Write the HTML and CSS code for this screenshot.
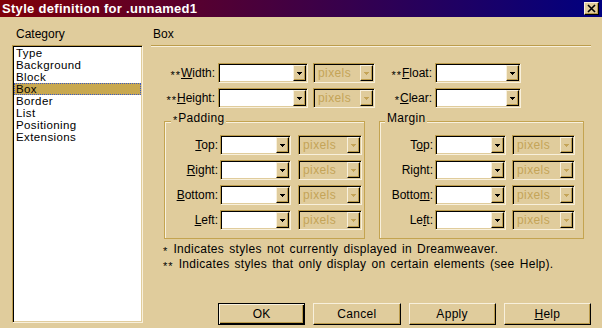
FILE: index.html
```html
<!DOCTYPE html>
<html lang="en">
<head>
    <meta charset="UTF-8">
    <title>Style definition for .unnamed1</title>
    <link rel="stylesheet" href="styles.css">
</head>
<body>

    <div class="dialog">
        <div class="titlebar">
            <span class="title">Style definition for .unnamed1</span>
            <span class="close">
                <svg width="13" height="11" viewBox="0 0 13 11"><path d="M3 2l7 7M10 2l-7 7" stroke="#000" stroke-width="1.6" fill="none"/></svg>
            </span>
        </div>

        <div class="dialog-body">
            <!-- Category list on the left -->
            <div class="category-col">
                <div class="caption">Category</div>
                <ul class="listbox">
                    <li>Type</li>
                    <li>Background</li>
                    <li>Block</li>
                    <li class="selected">Box</li>
                    <li>Border</li>
                    <li>List</li>
                    <li>Positioning</li>
                    <li>Extensions</li>
                </ul>
            </div>

            <div class="main-col">
                <div class="caption heading">Box</div>
                <div class="rule"></div>

                <div class="size-grid">
                    <div class="label"><span class="ast">**</span><u>W</u>idth:</div>
                    <div class="combo"><span class="field"></span><span class="drop"></span></div>
                    <div class="combo units disabled"><span class="field">pixels</span><span class="drop"></span></div>
                    <div class="label"><span class="ast">**</span><u>F</u>loat:</div>
                    <div class="combo wide"><span class="field"></span><span class="drop"></span></div>

                    <div class="label"><span class="ast">**</span><u>H</u>eight:</div>
                    <div class="combo"><span class="field"></span><span class="drop"></span></div>
                    <div class="combo units disabled"><span class="field">pixels</span><span class="drop"></span></div>
                    <div class="label"><span class="ast">*</span><u>C</u>lear:</div>
                    <div class="combo wide"><span class="field"></span><span class="drop"></span></div>
                </div>

                <div class="groups">
                    <div class="group group-padding">
                        <div class="group-title"><span class="ast">*</span>Padding</div>
                        <div class="group-grid">
                            <div class="label"><u>T</u>op:</div>
                            <div class="combo"><span class="field"></span><span class="drop"></span></div>
                            <div class="combo disabled"><span class="field">pixels</span><span class="drop"></span></div>

                            <div class="label"><u>R</u>ight:</div>
                            <div class="combo"><span class="field"></span><span class="drop"></span></div>
                            <div class="combo disabled"><span class="field">pixels</span><span class="drop"></span></div>

                            <div class="label"><u>B</u>ottom:</div>
                            <div class="combo"><span class="field"></span><span class="drop"></span></div>
                            <div class="combo disabled"><span class="field">pixels</span><span class="drop"></span></div>

                            <div class="label"><u>L</u>eft:</div>
                            <div class="combo"><span class="field"></span><span class="drop"></span></div>
                            <div class="combo disabled"><span class="field">pixels</span><span class="drop"></span></div>
                        </div>
                    </div>

                    <div class="group group-margin">
                        <div class="group-title">Margin</div>
                        <div class="group-grid">
                            <div class="label">T<u>o</u>p:</div>
                            <div class="combo"><span class="field"></span><span class="drop"></span></div>
                            <div class="combo disabled"><span class="field">pixels</span><span class="drop"></span></div>

                            <div class="label">Ri<u>g</u>ht:</div>
                            <div class="combo"><span class="field"></span><span class="drop"></span></div>
                            <div class="combo disabled"><span class="field">pixels</span><span class="drop"></span></div>

                            <div class="label">Botto<u>m</u>:</div>
                            <div class="combo"><span class="field"></span><span class="drop"></span></div>
                            <div class="combo disabled"><span class="field">pixels</span><span class="drop"></span></div>

                            <div class="label">Le<u>f</u>t:</div>
                            <div class="combo"><span class="field"></span><span class="drop"></span></div>
                            <div class="combo disabled"><span class="field">pixels</span><span class="drop"></span></div>
                        </div>
                    </div>
                </div>

                <div class="notes">
                    <div class="note"><span class="ast">*</span> Indicates styles not currently displayed in Dreamweaver.</div>
                    <div class="note"><span class="ast">**</span> Indicates styles that only display on certain elements (see Help).</div>
                </div>

                <div class="buttons">
                    <button class="btn default">OK</button>
                    <button class="btn">Cancel</button>
                    <button class="btn">Apply</button>
                    <button class="btn"><u>H</u>elp</button>
                </div>
            </div>
        </div>
    </div>

</body>
</html>
```

FILE: styles.css
```css
body {
    margin: 0;
    font-family: 'Liberation Sans', Arial, sans-serif;
    font-size: 12px;
    color: #000;
}

.dialog {
    width: 602px;
    height: 328px;
    background-color: #e0cc9c; /* tan face colour */
    overflow: hidden;
}

/* Title bar */
.titlebar {
    height: 17px;
    display: flex;
    align-items: center;
    justify-content: space-between;
    background: linear-gradient(to right, #800008, #000080);
}

.title {
    color: #fff;
    font-weight: bold;
    font-size: 13px;
    letter-spacing: 0.3px;
    padding-left: 2px;
    line-height: 17px;
}

.close {
    width: 15px;
    height: 13px;
    box-sizing: border-box;
    margin-right: 3px;
    background-color: #e0cc9c;
    border: 1px solid;
    border-color: #f8f0dc #000 #000 #f8f0dc;
    box-shadow: inset -1px -1px #bc9c4c;
    display: flex;
}

.dialog-body {
    display: flex;
    padding-top: 10px;
}

.caption {
    line-height: 14px;
    height: 14px;
    margin-bottom: 4px;
}

/* Category list */
.category-col {
    margin-left: 12px;
    width: 131px;
}

.category-col .caption {
    padding-left: 4px;
}

.listbox {
    list-style: none;
    margin: 0;
    padding: 1px;
    height: 278px;
    box-sizing: border-box;
    background: #fff;
    border: 1px solid;
    border-color: #bc9c4c #f8f0dc #f8f0dc #bc9c4c;
    box-shadow: inset 1px 1px #000, inset -1px -1px #e0cc9c;
}

.listbox li {
    line-height: 12px;
    height: 12px;
    font-size: 11.5px;
    letter-spacing: 0.4px;
    padding-left: 2px;
    box-sizing: border-box;
}

.listbox li.selected {
    background-color: #c8a850;
    outline: 1px dotted #3a5ac8;
    outline-offset: -1px;
}

/* Main panel */
.main-col {
    margin-left: 8px;
    width: 440px;
}

.heading {
    padding-left: 2px;
    margin-bottom: 4px;
}

.rule {
    height: 1px;
    background-color: #bc9c4c;
    border-bottom: 1px solid #f8f0dc;
}

.label {
    text-align: right;
    white-space: nowrap;
    line-height: 20px;
    height: 20px;
}

.ast {
    vertical-align: -2px;
    line-height: 1;
    font-size: 11px;
    letter-spacing: 1px;
}

.size-grid {
    margin-top: 16px;
    display: grid;
    grid-template-columns: 67px 95px 62px 60px 86px;
    grid-auto-rows: 20px;
    row-gap: 5px;
}

.size-grid .label {
    padding-right: 3px;
}

.size-grid .combo {
    width: 90px;
}

.size-grid .combo.units {
    width: 62px;
}

.size-grid .combo.wide {
    width: 86px;
}

/* Combo boxes */
.combo {
    display: flex;
    height: 20px;
    box-sizing: border-box;
    padding: 1px;
    border: 1px solid;
    border-color: #bc9c4c #f8f0dc #f8f0dc #bc9c4c;
    box-shadow: inset 1px 1px #000, inset -1px -1px #e0cc9c;
}

.field {
    flex: 1;
    background: #fff;
    line-height: 16px;
    padding-left: 3px;
    letter-spacing: 0.4px;
}

.drop {
    width: 13px;
    box-sizing: border-box;
    background-color: #e0cc9c;
    border: 1px solid;
    border-color: #f8f0dc #000 #000 #f8f0dc;
    box-shadow: inset -1px -1px #bc9c4c;
    display: flex;
    align-items: center;
    justify-content: center;
    color: #000;
}

.drop::after {
    content: "";
    width: 5px;
    height: 3px;
    margin-top: 1px;
    background:
        linear-gradient(currentColor, currentColor) 0 0 / 5px 1px no-repeat,
        linear-gradient(currentColor, currentColor) 1px 1px / 3px 1px no-repeat,
        linear-gradient(currentColor, currentColor) 2px 2px / 1px 1px no-repeat;
}

.combo.disabled .field {
    background-color: #e0cc9c;
    color: #c4a458;
}

.combo.disabled .drop {
    color: #c4a458;
}

/* Padding / Margin group boxes */
.groups {
    display: flex;
    margin-top: 13px;
    margin-left: 13px;
    gap: 14px;
}

.group {
    height: 118px;
    box-sizing: border-box;
    border: 1px solid #c4a450;
    box-shadow: inset 1px 1px #f8f0dc;
}

.group-padding {
    width: 201px;
}

.group-margin {
    width: 205px;
}

.group-title {
    margin-top: -11px;
    line-height: 14px;
    height: 14px;
    width: fit-content;
    background-color: #e0cc9c;
    padding: 0 2px;
    letter-spacing: 0.3px;
}

.group-padding .group-title {
    margin-left: 6px;
}

.group-margin .group-title {
    margin-left: 5px;
}

.group-grid {
    margin-top: 10px;
    display: grid;
    grid-auto-rows: 20px;
    row-gap: 5px;
}

.group-grid .label {
    padding-right: 2px;
}

.group-padding .group-grid {
    grid-template-columns: 55px 78px 64px;
}

.group-margin .group-grid {
    grid-template-columns: 55px 77px 63px;
}

.group-grid .combo {
    width: 71px;
}

.group-padding .group-grid .combo.disabled {
    width: 64px;
}

.group-margin .group-grid .combo.disabled {
    width: 63px;
}

/* Footnotes */
.notes {
    margin-top: 3px;
    margin-left: 12px;
    letter-spacing: 0.3px;
    word-spacing: 1.5px;
}

.note {
    line-height: 15px;
    height: 15px;
    white-space: nowrap;
}

/* Dialog buttons */
.buttons {
    display: flex;
    gap: 8px;
    margin-top: 31px;
    margin-left: 67px;
}

.btn {
    width: 88px;
    height: 22px;
    box-sizing: border-box;
    padding: 0;
    font-family: inherit;
    font-size: 12px;
    letter-spacing: 0.3px;
    color: #000;
    background-color: #e0cc9c;
    border: 1px solid;
    border-color: #f8f0dc #000 #000 #f8f0dc;
    box-shadow: inset -1px -1px #bc9c4c;
}

.btn.default {
    border-color: #000;
    box-shadow: inset 1px 1px #f8f0dc, inset -1px -1px #000, inset -2px -2px #bc9c4c;
}
```
